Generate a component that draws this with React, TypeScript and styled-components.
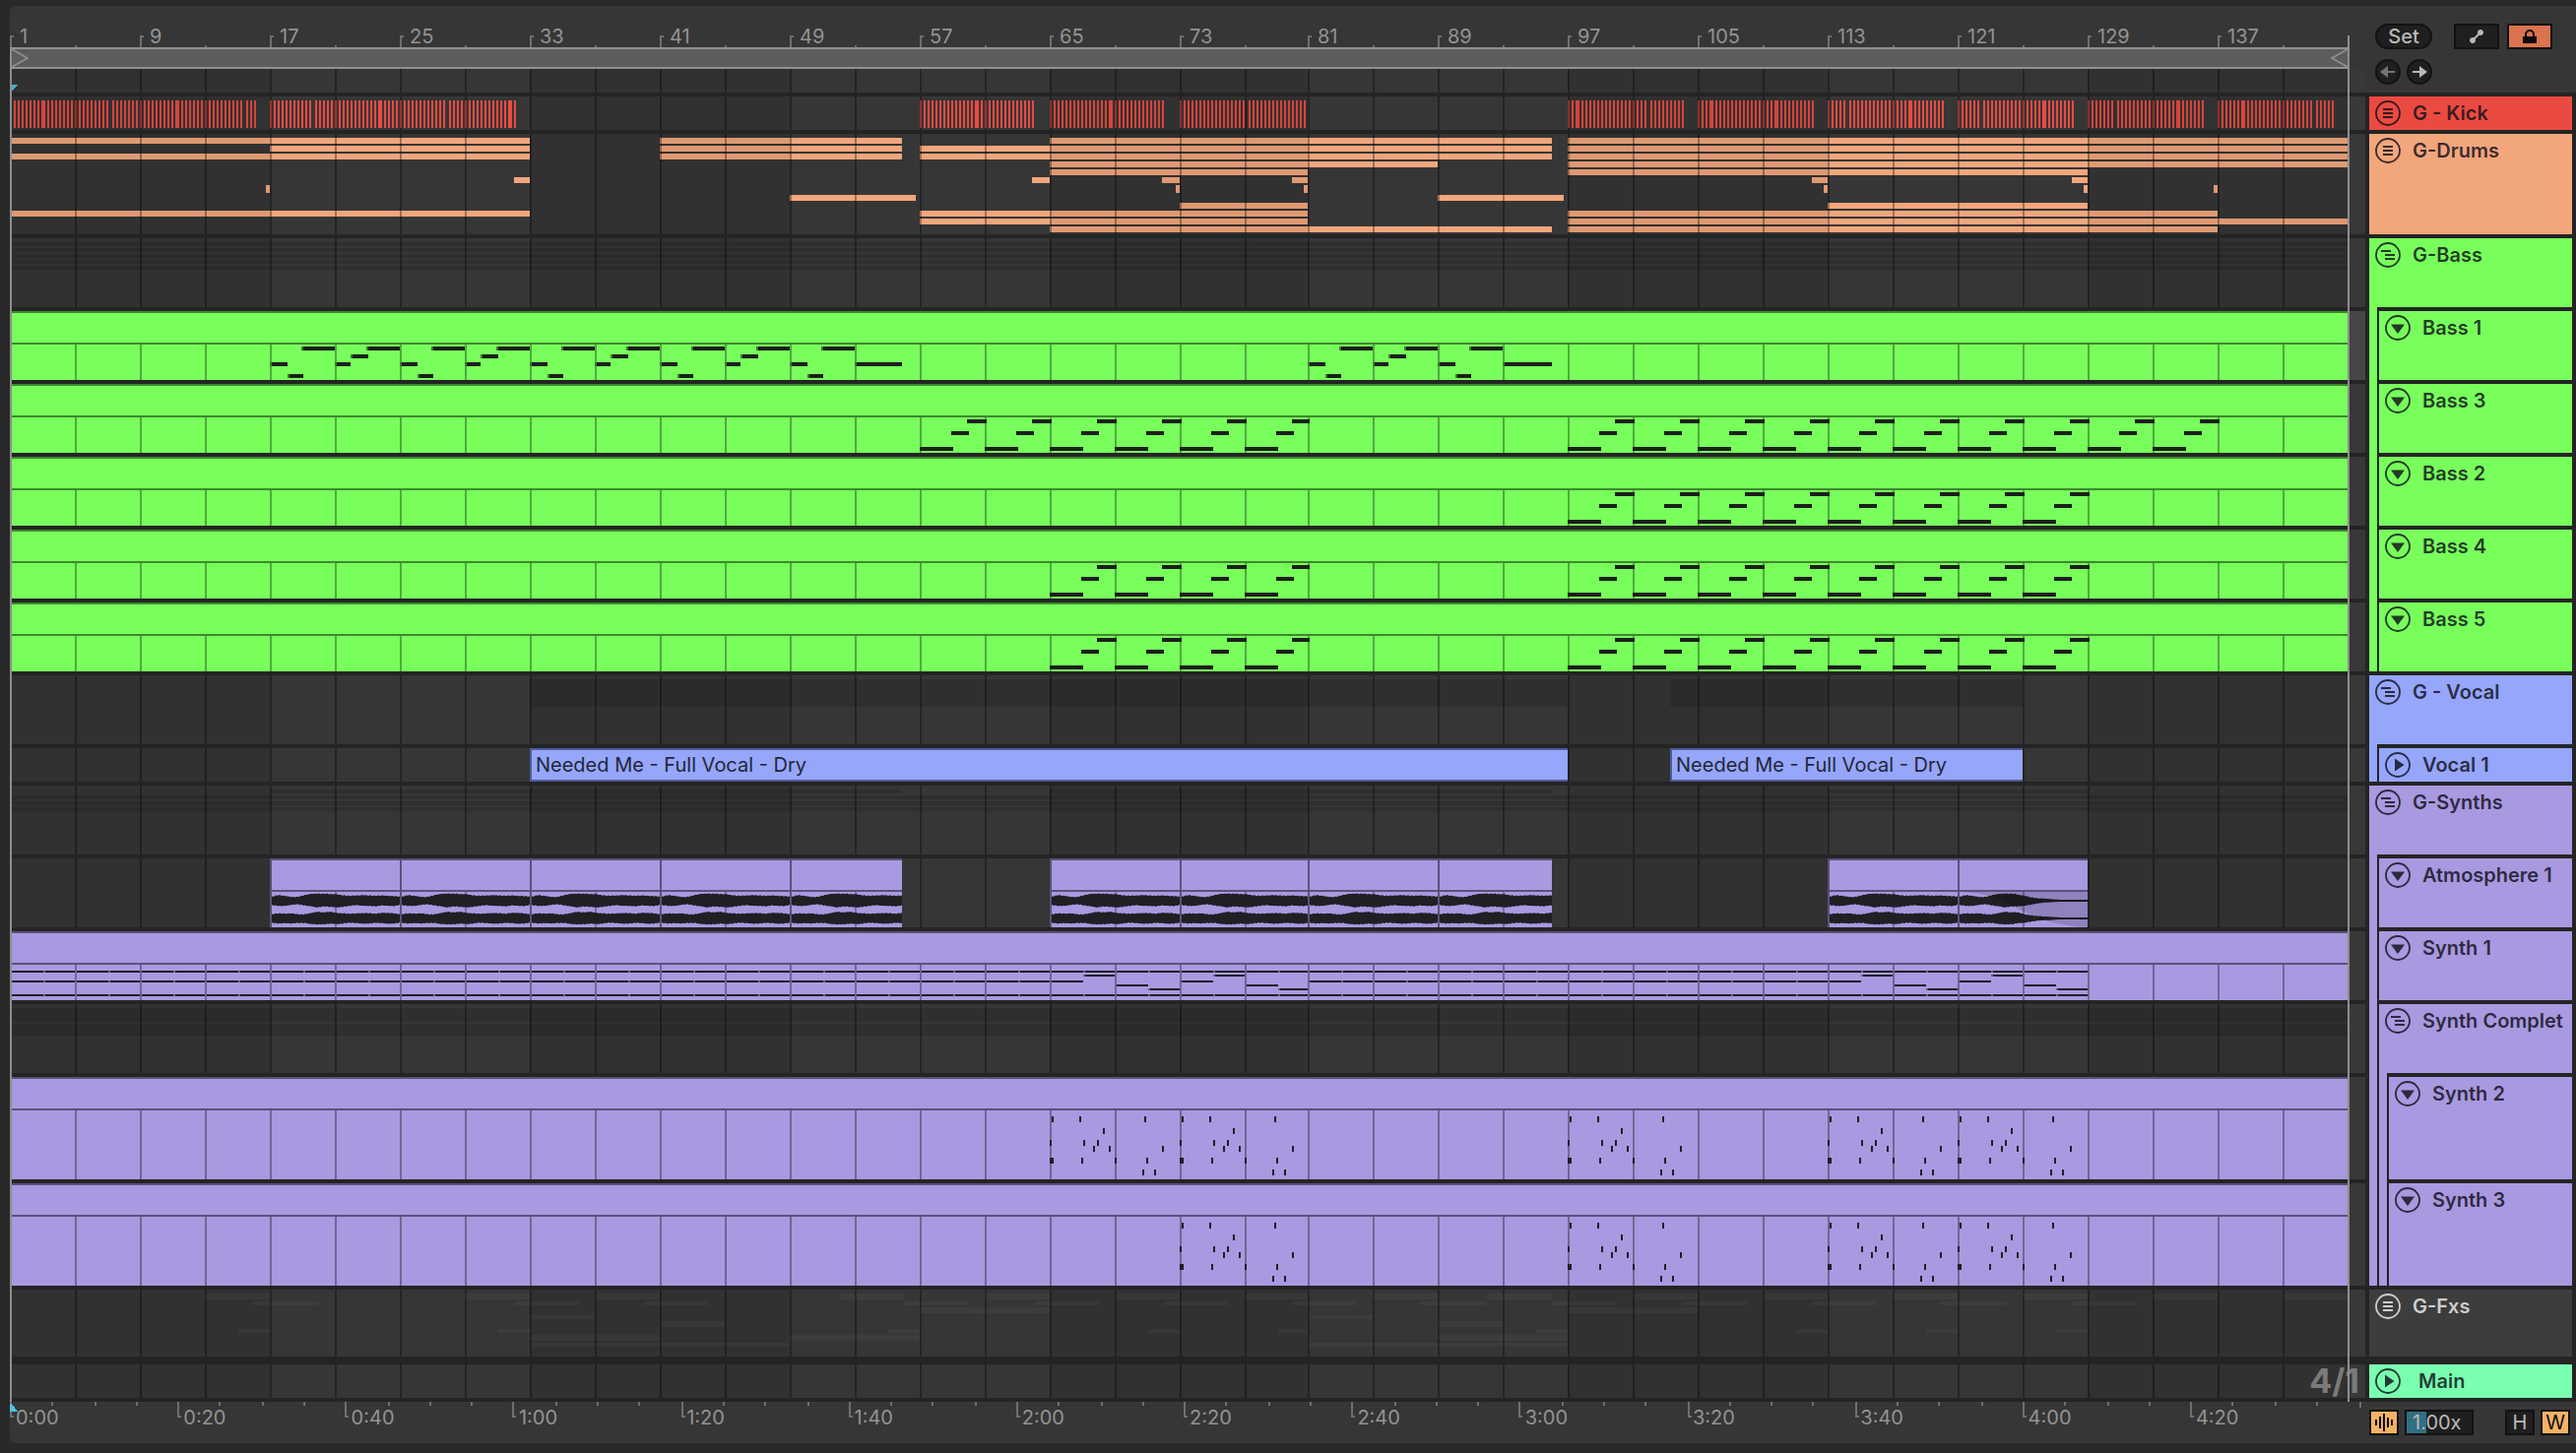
import React from "react";
import styled, { createGlobalStyle } from "styled-components";

/* ---------- timeline geometry ---------- */

const SPAN = 2376;
const BAR = 16.5;
const LAST_BAR = 145;

const at = (bar: number) => {
  const raw = (bar - 1) * BAR - (bar >= 81 ? 2 : 0);
  return 2 * Math.round(raw / 2);
};

const range = (from: number, to: number, step: number) => {
  const out: number[] = [];
  for (let v = from; v < to; v += step) out.push(v);
  return out;
};

const gridBars = range(1, LAST_BAR, 4);
const labelBars = range(1, LAST_BAR, 8);

const ink = "#1f1f24";
const gap = "#242424";
const green = "#78ff5c";
const blue = "#96a6fa";
const purple = "#a999e0";
const orange = "#f2a67c";
const red = "#eb4a41";
const mint = "#7affb0";

/* ---------- page ---------- */

const GlobalStyle = createGlobalStyle`
  *, *::before, *::after { box-sizing: border-box; }
  body { margin: 0; background: #292929; }
  button, input { font: inherit; padding: 0; margin: 0; }
`;

const Page = styled.main`
  min-height: 100vh;
  padding: 6px 0 10px 10px;
  background: #292929;
  font-family: Inter, "Liberation Sans", sans-serif;
  font-size: 20px;
  line-height: 26px;
  color: #939393;
`;

const Panel = styled.div`
  display: grid;
  grid-template-columns: minmax(0, 1fr) 214px;
  background: ${gap};
  border-radius: 6px 0 0 6px;
  overflow: hidden;
`;

const Arrangement = styled.section`
  position: relative;
  display: flex;
  flex-direction: column;
`;

const EdgeLine = styled.i<{ $end?: boolean }>`
  position: absolute;
  z-index: 2;
  top: ${(p) => (p.$end ? 30 : 42)}px;
  bottom: 42px;
  width: 2px;
  background: #8e8e8e;
  ${(p) => (p.$end ? "right: 16px;" : "left: 0;")}
`;

/* ---------- bar ruler ---------- */

const BarRuler = styled.div`
  position: relative;
  height: 42px;
  padding-right: 16px;
  background: #363636;
`;

const BarLabels = styled.div`
  display: grid;
  height: 42px;
  grid-template-columns: ${labelBars
    .map((b) => `minmax(0, ${at(Math.min(b + 8, LAST_BAR)) - at(b)}fr)`)
    .join(" ")} 2px;
  align-items: end;
`;

const BarLabel = styled.span`
  padding: 0 0 0 10px;
  line-height: 22px;
`;

const Ticks = styled.svg`
  position: absolute;
  inset: 0;
  display: block;
  width: calc(100% - 16px);
  height: 100%;
`;

const LoopStrip = styled.div`
  display: flex;
  justify-content: space-between;
  height: 22px;
  margin-right: 16px;
  border: solid #909090;
  border-width: 2px 0;
  background: #5d5d5d;
  svg { display: block; }
`;

const LoopRow = styled.div`
  height: 22px;
  background: #363636;
`;

/* ---------- lanes ---------- */

const Lane = styled.div<{ $h: number; $tail?: string; $before?: number }>`
  position: relative;
  display: grid;
  grid-template-columns: minmax(0, 1fr) 16px;
  height: ${(p) => p.$h}px;
  margin-top: ${(p) => p.$before ?? 4}px;
  background: ${(p) => p.$tail ?? "#383838"};
`;

const LaneCanvas = styled.svg`
  display: block;
  width: 100%;
  height: 100%;
  background: #363636;
`;

const Clip = styled.div`
  position: absolute;
  top: 0;
  bottom: 0;
  padding-left: 4px;
  border: 2px solid #4e5a99;
  border-right: 0;
  background: ${blue};
  color: #232638;
  line-height: 30px;
  white-space: nowrap;
  overflow: hidden;
`;

const ClipLayer = styled.div`
  position: absolute;
  inset: 0 16px 0 0;
`;

const Signature = styled.span`
  position: absolute;
  right: 6px;
  top: 0;
  line-height: 34px;
  font-size: 34px;
  font-weight: 700;
  color: #7a7a7a;
`;

const Shade = ({ h }: { h: number }) => (
  <g fill="#000" fillOpacity={0.08}>
    {[1, 33, 65, 97, 129].map((b) => (
      <rect key={b} x={at(b)} y={0} width={at(b + 16) - at(b)} height={h} />
    ))}
  </g>
);

const Grid = ({ y = 0, h }: { y?: number; h: number }) => (
  <g fill="#000" fillOpacity={0.33}>
    {gridBars.map((b) => (
      <rect key={b} x={at(b)} y={y} width={2} height={h} />
    ))}
  </g>
);

interface CanvasProps {
  h: number;
  children?: React.ReactNode;
}

const Canvas = ({ h, children }: CanvasProps) => (
  <LaneCanvas viewBox={`0 0 ${SPAN} ${h}`} preserveAspectRatio="none" shapeRendering="crispEdges" aria-hidden="true">
    {children}
  </LaneCanvas>
);

/* lane whose content sits under the grid */
const PlainLane = ({ h, before, extra, children }: { h: number; before?: number; extra?: React.ReactNode; children?: React.ReactNode }) => (
  <Lane $h={h} $before={before}>
    <Canvas h={h}>
      {children}
      <Shade h={h} />
      <Grid h={h} />
    </Canvas>
    {extra}
  </Lane>
);

type Seg = [number, number];

const Segs = ({ y, h, list, fill, opacity = 1 }: { y: number; h: number; list: Seg[]; fill: string; opacity?: number }) => (
  <g fill={fill} fillOpacity={opacity}>
    {list.map(([a, b]) => (
      <rect key={a} x={at(a)} y={y} width={at(b) - at(a)} height={h} />
    ))}
  </g>
);

/* ---------- kick ---------- */

/* start bar, length in px, kind of each drift (wide note or gap), beat offsets of the drifts */
const kickClips: [number, number, string, number[]][] = [
  [1, 249, "WGWG", [8, 24, 41, 57]],
  [17, 249, "GWGW", [10, 27, 43, 59]],
  [57, 117, "W", [14]],
  [65, 117, "W", [15]],
  [73, 130, "G", [16]],
  [97, 117, "WG", [2, 19]],
  [105, 118, "WW", [3, 19]],
  [113, 118, "GW", [4, 20]],
  [121, 117, "GW", [5, 21]],
  [129, 117, "GW", [6, 22]],
  [137, 117, "WG", [6, 23]],
];

const KickNotes = () => (
  <g fill={red}>
    {kickClips.map(([bar, end, kinds, beats]) => {
      const rects: React.ReactElement[] = [];
      let x = 0;
      for (let n = 0; x < end; n += 1) {
        const hit = beats.indexOf(n);
        const wide = hit >= 0 && kinds[hit] === "W";
        rects.push(<rect key={n} x={at(bar) + x} y={4} width={wide ? 4 : 2} height={28} />);
        x += hit >= 0 ? 6 : 4;
      }
      return <g key={bar}>{rects}</g>;
    })}
  </g>
);

/* ---------- drums ---------- */

const drumRows: [number, number, Seg[]][] = [
  [4, 6, [[1, 33], [41, 55.9], [65, 96], [97, 145]]],
  [12, 6, [[17, 33], [41, 55.9], [57, 96], [97, 145]]],
  [20, 6, [[1, 33], [41, 55.9], [57, 96], [97, 145]]],
  [28, 6, [[65, 89], [97, 145]]],
  [36, 6, [[65, 81], [97, 129]]],
  [44, 6, [[32, 33], [63.9, 65], [71.9, 73], [79.9, 81], [112, 113], [128, 129]]],
  [52, 8, [[16.75, 17], [72.7, 73], [80.6, 81], [112.75, 113], [128.75, 129], [136.75, 137]]],
  [62, 6, [[49, 56.75], [89, 96.75]]],
  [70, 6, [[73, 81], [113, 129]]],
  [78, 6, [[1, 33], [57, 81], [97, 137]]],
  [86, 6, [[57, 81], [97, 145]]],
  [94, 6, [[65, 96], [97, 137]]],
];

/* ---------- midi clip lanes ---------- */

interface MidiProps {
  h: number;
  color: string;
  edge: string;
  tail?: string;
  children?: React.ReactNode;
}

const MidiLane = ({ h, color, edge, tail, children }: MidiProps) => (
  <Lane $h={h} $tail={tail}>
    <Canvas h={h}>
      <rect x={0} y={0} width={at(LAST_BAR)} height={h} fill={color} />
      <rect x={0} y={0} width={at(LAST_BAR)} height={2} fill={edge} />
      <rect x={0} y={32} width={at(LAST_BAR)} height={2} fill={edge} />
      <Grid y={34} h={h - 34} />
      {children}
    </Canvas>
  </Lane>
);

/* offset in bars, length in bars, y */
type Note = [number, number, number];

const Pattern = ({ starts, notes, nick }: { starts: number[]; notes: Note[]; nick?: string }) => (
  <>
    {starts.flatMap((s) =>
      notes.map(([o, len, y]) => (
        <g key={`${s}-${o}-${y}`}>
          <rect x={at(s + o)} y={y} width={at(s + o + len) - at(s + o)} height={4} fill="#1b1f1b" />
          {nick && <rect x={at(s + o)} y={y} width={2} height={4} fill={nick} />}
        </g>
      ))
    )}
  </>
);

const bassOneA: Note[] = [[0, 1.1, 52], [1.1, 1, 64], [1.95, 2.05, 36]];
const bassOneB: Note[] = [[0, 1, 52], [0.95, 1.05, 44], [1.9, 2.1, 36]];
const bassLow: Note[] = [[0, 2, 64], [1.9, 1.15, 48], [2.88, 1.2, 36]];

const greenEdge = "#3d8a2d";
const purpleEdge = "#5c5079";

const BassLane = ({ starts }: { starts: number[] }) => (
  <MidiLane h={70} color={green} edge={greenEdge}>
    <Pattern starts={starts} notes={bassLow} />
  </MidiLane>
);

/* ---------- atmosphere audio ---------- */

const topA = [4, 5.5, 4.6, 3.6, 3.6, 5.6, 6.8, 7.2, 7.2, 7, 6.8, 5.6, 5.4, 5.6, 6, 5.6, 5.2, 5.6, 5, 4.6, 4];
const lowA = [4, 5, 5, 4, 3.4, 4.6, 5.6, 7, 5.8, 6.4, 7, 6.4, 5.6, 4.8, 5.4, 5.4, 5.8, 4.8, 5.2, 5.2, 3.6];
const topB = [4, 5, 4.6, 5, 4, 4, 5.4, 6.8, 6.2, 7, 5.8, 5.4, 5, 5.4, 5.8, 5.6, 5, 5.8, 5.6, 5, 4];
const lowB = [4, 5, 4.4, 5, 4.4, 4.4, 5.6, 6.2, 6, 5.4, 6, 5.4, 4.6, 5, 5.6, 5.4, 4.6, 4.8, 5.4, 5, 3.6];

const sample = (env: number[], t: number) => {
  const p = Math.min(t * (env.length - 1), env.length - 1.001);
  const i = Math.floor(p);
  return env[i] + (env[i + 1] - env[i]) * (p - i);
};

const wavePath = (x0: number, width: number, mid: number, top: number[], low: number[], fade: boolean) => {
  const steps = range(0, width + 1, 2);
  const level = (x: number) => {
    if (!fade) return 1;
    const t = x / 132;
    return t < 0.42 ? 1 : Math.max(0, Math.pow(1 - (t - 0.42) / 0.58, 1.8));
  };
  const noise = (x: number, k: number) => Math.sin(x * 1.7 + k) * 0.4 + Math.sin(x * 3.1 + k * 2) * 0.3;
  const up = steps.map((x) => `${x0 + x},${mid - Math.max(1, (sample(top, x / 132) + noise(x, 1)) * level(x))}`);
  const down = steps
    .slice()
    .reverse()
    .map((x) => `${x0 + x},${mid + Math.max(1, (sample(low, x / 132) + noise(x, 4)) * level(x))}`);
  return `M${up.join("L")}L${down.join("L")}Z`;
};

const atmosphere: { bar: number; end: number; fade?: boolean }[] = [
  { bar: 17, end: 25 }, { bar: 25, end: 33 }, { bar: 33, end: 41 }, { bar: 41, end: 49 }, { bar: 49, end: 55.9 },
  { bar: 65, end: 73 }, { bar: 73, end: 81 }, { bar: 81, end: 89 }, { bar: 89, end: 96 },
  { bar: 113, end: 121 }, { bar: 121, end: 129, fade: true },
];

const AtmosphereClips = () => (
  <>
    {atmosphere.map(({ bar, end, fade }) => {
      const x = at(bar);
      const w = at(end) - x;
      return (
        <g key={bar}>
          <rect x={x} y={0} width={w} height={70} fill={purple} />
          <rect x={x} y={0} width={w} height={2} fill={purpleEdge} />
          <rect x={x} y={32} width={w} height={2} fill={purpleEdge} />
          <rect x={x + 66} y={34} width={2} height={36} fill="#7a6ba3" />
          <g shapeRendering="auto" fill={ink}>
            <path d={wavePath(x + 2, w - 2, 43, topA, lowA, !!fade)} />
            <path d={wavePath(x + 2, w - 2, 61, topB, lowB, !!fade)} />
          </g>
          <rect x={x} y={0} width={2} height={70} fill={purpleEdge} />
          {fade && (
            <path
              shapeRendering="auto"
              d={`M${x + 4} 34C${x + 60} 36 ${x + 60} 66 ${x + w} 70V34Z`}
              fill="#000"
              fillOpacity={0.15}
            />
          )}
        </g>
      );
    })}
  </>
);

/* ---------- synths ---------- */

const leadVoice: Record<number, number> = {};
[65, 73, 113, 121].forEach((b) => {
  leadVoice[b + 2] = 44;
  leadVoice[b + 4] = 54;
  leadVoice[b + 6] = 58;
});

const SynthOneNotes = () => (
  <>
    {range(1, 129, 2).flatMap((b) =>
      [40, leadVoice[b] ?? 50, 64].map((y) => (
        <g key={`${b}-${y}`}>
          <rect x={at(b)} y={y} width={at(b + 2) - at(b)} height={2} fill={ink} />
          <rect x={at(b)} y={y} width={2} height={2} fill="#6b5e91" />
        </g>
      ))
    )}
  </>
);

/* pixel offset, y, width */
const arp: [number, number, number][] = [
  [2, 40, 2], [30, 40, 2], [96, 40, 2], [54, 52, 2], [0, 64, 2], [34, 64, 2], [48, 64, 2],
  [44, 70, 2], [60, 70, 2], [114, 70, 2], [0, 82, 4], [32, 82, 2], [66, 82, 2], [98, 82, 2],
  [94, 94, 2], [106, 94, 2],
];

const Arp = ({ starts }: { starts: number[] }) => (
  <g fill={ink}>
    {starts.flatMap((s) => arp.map(([o, y, w]) => <rect key={`${s}-${o}-${y}`} x={at(s) + o} y={y} width={w} height={6} />))}
  </g>
);

/* ---------- effects ---------- */

const fxRows: [number, number, Seg[]][] = [
  [4, 6, [[13, 17], [29, 33], [37, 41], [52, 56], [61, 65], [69, 73], [77, 81], [85, 89], [92, 96], [101, 105], [109, 113], [117, 121], [125, 129], [133, 137], [141, 145]]],
  [12, 4, [[16, 20], [32, 36], [40, 44], [56, 60], [64, 68], [72, 76], [80, 84], [88, 92], [96, 100], [104, 108], [112, 116], [120, 124], [128, 132]]],
  [18, 6, [[57, 65], [97, 105]]],
  [26, 4, [[33, 37], [81, 85]]],
  [32, 6, [[41, 45], [89, 93]]],
  [40, 4, [[15, 17], [31, 33], [55, 57], [71, 73], [79, 81], [95, 97], [111, 113], [119, 121], [127, 129]]],
  [46, 6, [[33, 41], [49, 57], [89, 97]]],
  [54, 4, [[33, 49], [81, 97]]],
];

/* ---------- time ruler ---------- */

const times = ["0:00", "0:20", "0:40", "1:00", "1:20", "1:40", "2:00", "2:20", "2:40", "3:00", "3:20", "3:40", "4:00", "4:20"];
const timeX = (seconds: number) => 2 * Math.round((seconds * 8.516) / 2);

const TimeRuler = styled.div`
  position: relative;
  height: 42px;
  margin-top: 4px;
  background: #363636;
`;

const TimeTicks = styled.svg`
  position: absolute;
  inset: 0;
  display: block;
  width: 100%;
  height: 100%;
`;

const TimeLabels = styled.div`
  display: grid;
  grid-template-columns: repeat(13, minmax(0, 1703fr)) minmax(0, 1781fr);
  height: 42px;
`;

const TimeLabel = styled.span`
  padding: 3px 0 0 6px;
`;

/* ---------- headers ---------- */

const Side = styled.aside`
  display: flex;
  flex-direction: column;
`;

const Toolbar = styled.div`
  display: flex;
  flex-direction: column;
  gap: 10px;
  height: 88px;
  padding: 18px 24px 0 10px;
  background: #363636;
`;

const ToolRow = styled.div<{ $gap: number }>`
  display: flex;
  gap: ${(p) => p.$gap}px;
  align-items: center;
`;

const Spacer = styled.div`
  flex: 1;
`;

const Box = styled.button<{ $w: number; $fill?: string; $round?: boolean; $dim?: boolean }>`
  display: flex;
  align-items: center;
  justify-content: center;
  width: ${(p) => p.$w}px;
  height: 26px;
  border: 2px solid #121212;
  border-radius: ${(p) => (p.$round ? 13 : 0)}px;
  background: ${(p) => p.$fill ?? "#1f1f1f"};
  color: ${(p) => (p.$fill ? "#0c0c0c" : p.$dim ? "#757575" : "#b9b9b9")};
  line-height: 22px;
  svg { display: block; flex: none; }
`;

const SetButton = styled(Box)`
  font-weight: 500;
`;

const Headers = styled.div`
  display: flex;
  flex-direction: column;
  gap: 4px;
  padding: 4px 4px 0 4px;
`;

const Track = styled.div<{ $color: string; $light?: boolean }>`
  background: ${(p) => p.$color};
  color: ${(p) => (p.$light ? "#cdcdcd" : "rgba(16, 16, 26, 0.82)")};
`;

const TrackTitle = styled.div<{ $h: number; $wide?: boolean }>`
  display: flex;
  align-items: flex-start;
  gap: ${(p) => (p.$wide ? 18 : 12)}px;
  height: ${(p) => p.$h}px;
  padding: 4px 0 0 6px;
  font-weight: 600;
  white-space: nowrap;
  overflow: hidden;
`;

const Children = styled.div`
  display: flex;
  flex-direction: column;
  gap: 4px;
  margin-left: 8px;
  padding: 4px 0 0 2px;
  background: ${gap};
`;

const MainTrack = styled.div`
  margin-top: 4px;
`;

const Fold = styled.button`
  flex: none;
  display: block;
  width: 26px;
  height: 26px;
  border: 0;
  background: none;
  color: inherit;
  svg { display: block; }
`;

type Glyph = "lines" | "group" | "down" | "play";

const glyphs: Record<Glyph, React.ReactElement> = {
  lines: <path d="M8 8h10v2H8zM8 12h10v2H8zM8 16h10v2H8z" />,
  group: <path d="M6 8h10v2H6zM10 12h10v2H10zM10 16h10v2H10z" />,
  down: <path d="M6 9.5h14L13 19z" />,
  play: <path d="M10 6.5v13L19.5 13z" />,
};

interface NodeProps {
  name: string;
  color: string;
  h: number;
  glyph: Glyph;
  light?: boolean;
  wide?: boolean;
  children?: React.ReactNode;
}

const TrackNode = ({ name, color, h, glyph, light, wide, children }: NodeProps) => (
  <Track $color={color} $light={light}>
    <TrackTitle $h={h} $wide={wide}>
      <Fold type="button" aria-label={`Fold ${name}`}>
        <svg width="26" height="26" viewBox="0 0 26 26" fill="currentColor">
          <circle cx="13" cy="13" r="12" fill="none" stroke="currentColor" strokeWidth="1.8" />
          {glyphs[glyph]}
        </svg>
      </Fold>
      <span>{name}</span>
    </TrackTitle>
    {children && <Children>{children}</Children>}
  </Track>
);

const Footer = styled.div`
  display: flex;
  align-items: flex-start;
  gap: 6px;
  height: 42px;
  margin-top: 4px;
  padding: 8px 6px 0 4px;
  background: #363636;
`;

const Speed = styled.input`
  width: 70px;
  height: 26px;
  padding: 0 0 0 6px;
  border: 2px solid #121212;
  background: linear-gradient(90deg, #316f82 20px, #1f1f1f 20px);
  color: #b9b9b9;
`;

const Arrow = ({ back }: { back?: boolean }) => (
  <svg width="16" height="14" viewBox="0 0 16 14" fill="currentColor">
    {back ? <path d="M0 7 8 1v5h7v2H8v5z" /> : <path d="M16 7 8 1v5H1v2h7v5z" />}
  </svg>
);

/* ---------- app ---------- */

export default function App() {
  return (
    <>
      <GlobalStyle />
      <Page>
        <Panel>
          <Arrangement aria-label="Arrangement">
            <EdgeLine />
            <EdgeLine $end />
            <BarRuler>
              <Ticks viewBox={`0 0 ${SPAN} 42`} preserveAspectRatio="none" shapeRendering="crispEdges" fill="#6f6f6f">
                {gridBars.map((b) =>
                  (b - 1) % 8 === 0 ? (
                    <path key={b} d={`M${at(b)} 30h4v2h-2v10h-2z`} />
                  ) : (
                    <rect key={b} x={at(b)} y={40} width={2} height={2} />
                  )
                )}
              </Ticks>
              <BarLabels>
                {labelBars.map((b) => (
                  <BarLabel key={b}>{b}</BarLabel>
                ))}
              </BarLabels>
            </BarRuler>
            <LoopRow>
              <LoopStrip>
                <svg width="22" height="18" viewBox="0 0 22 18" fill="none" stroke="#909090" strokeWidth="1.6">
                  <path d="M2 0 18 9 2 18" />
                </svg>
                <svg width="22" height="18" viewBox="0 0 22 18" fill="none" stroke="#909090" strokeWidth="1.6">
                  <path d="M20 0 4 9l16 9" />
                </svg>
              </LoopStrip>
            </LoopRow>
            <PlainLane h={24} before={0}>
              <path d="M0 16h8l-7 7z" fill="#4fc1dc" />
            </PlainLane>
            <PlainLane h={34}>
              <KickNotes />
            </PlainLane>
            <PlainLane h={102}>
              {drumRows.map(([y, h, list]) => (
                <Segs key={y} y={y} h={h} list={list} fill={orange} />
              ))}
            </PlainLane>
            <PlainLane h={70}>
              {[4, 10, 16, 22, 28].map((y) => (
                <Segs key={y} y={y} h={4} list={[[1, 145]]} fill="#000" opacity={0.13} />
              ))}
            </PlainLane>
            <MidiLane h={70} color={green} edge={greenEdge} tail="#464646">
              <Pattern starts={[17, 25, 33, 41, 49, 81, 89]} notes={bassOneA} nick="#3a7a2d" />
              <Pattern starts={[21, 29, 37, 45, 85]} notes={bassOneB} nick="#3a7a2d" />
              <Pattern starts={[53]} notes={[[0, 2.9, 52]]} nick="#3a7a2d" />
              <Pattern starts={[93]} notes={[[0, 3, 52]]} nick="#3a7a2d" />
            </MidiLane>
            <BassLane starts={[...range(57, 81, 4), ...range(97, 137, 4)]} />
            <BassLane starts={range(97, 129, 4)} />
            <BassLane starts={[...range(65, 81, 4), ...range(97, 129, 4)]} />
            <BassLane starts={[...range(65, 81, 4), ...range(97, 129, 4)]} />
            <PlainLane h={70}>
              <Segs y={4} h={28} list={[[33, 97], [103.3, 125]]} fill="#000" opacity={0.13} />
            </PlainLane>
            <PlainLane
              h={34}
              extra={
                <ClipLayer>
                  {([[33, 97], [103.3, 125]] as Seg[]).map(([a, b]) => (
                    <Clip key={a} style={{ left: `${(at(a) / SPAN) * 100}%`, width: `${((at(b) - at(a)) / SPAN) * 100}%` }}>
                      Needed Me - Full Vocal - Dry
                    </Clip>
                  ))}
                </ClipLayer>
              }
            />
            <PlainLane h={70}>
              <Segs y={4} h={4} list={[[17, 55.9], [65, 96], [113, 129]]} fill="#000" opacity={0.13} />
              {[10, 16, 22].map((y) => (
                <Segs key={y} y={y} h={4} list={[[1, 145]]} fill="#000" opacity={0.13} />
              ))}
            </PlainLane>
            <Lane $h={70}>
              <Canvas h={70}>
                <Shade h={70} />
                <Grid h={70} />
                <AtmosphereClips />
              </Canvas>
            </Lane>
            <MidiLane h={70} color={purple} edge={purpleEdge}>
              <SynthOneNotes />
            </MidiLane>
            <PlainLane h={70}>
              <Segs y={4} h={14} list={[[1, 145]]} fill="#000" opacity={0.13} />
              <Segs y={20} h={12} list={[[1, 145]]} fill="#000" opacity={0.13} />
            </PlainLane>
            <MidiLane h={104} color={purple} edge={purpleEdge}>
              <Arp starts={[65, 73, 97, 113, 121]} />
            </MidiLane>
            <MidiLane h={104} color={purple} edge={purpleEdge}>
              <Arp starts={[73, 97, 113, 121]} />
            </MidiLane>
            <PlainLane h={68}>
              {fxRows.map(([y, h, list]) => (
                <Segs key={y} y={y} h={h} list={list} fill="#fff" opacity={0.03} />
              ))}
            </PlainLane>
            <PlainLane h={34} before={8} extra={<Signature>4/1</Signature>} />
            <TimeRuler>
              <TimeTicks viewBox={`0 0 ${SPAN + 16} 42`} preserveAspectRatio="none" shapeRendering="crispEdges" fill="#6f6f6f">
                {range(0, 280, 5).map((s) =>
                  s % 20 === 0 ? (
                    <path key={s} d={`M${timeX(s)} 0h2v14h2v2h-4z`} />
                  ) : (
                    <rect key={s} x={timeX(s)} y={0} width={2} height={4} />
                  )
                )}
                <rect x={timeX(280) + 2} y={0} width={2} height={6} />
                <path d="M0 2h2l6 8H0z" fill="#4fc1dc" />
              </TimeTicks>
              <TimeLabels>
                {times.map((t) => (
                  <TimeLabel key={t}>{t}</TimeLabel>
                ))}
              </TimeLabels>
            </TimeRuler>
          </Arrangement>

          <Side aria-label="Tracks">
            <Toolbar>
              <ToolRow $gap={8}>
                <SetButton type="button" $w={58} $round>Set</SetButton>
                <Spacer />
                <Box type="button" $w={46} aria-label="Automation mode">
                  <svg width="16" height="16" viewBox="0 0 16 16" fill="currentColor" stroke="currentColor">
                    <path d="M4 12 12 4" strokeWidth="2" />
                    <circle cx="4" cy="12" r="2.5" />
                    <circle cx="12" cy="4" r="2.5" />
                  </svg>
                </Box>
                <Box type="button" $w={46} $fill="#db7350" aria-label="Lock envelopes">
                  <svg width="16" height="16" viewBox="0 0 16 16" fill="none" stroke="currentColor">
                    <path d="M4 8V6a4 4 0 0 1 8 0v2" strokeWidth="2" />
                    <path d="M1 8h14v7H1z" fill="currentColor" stroke="none" />
                  </svg>
                </Box>
              </ToolRow>
              <ToolRow $gap={6}>
                <Box type="button" $w={26} $round $dim aria-label="Previous locator"><Arrow back /></Box>
                <Box type="button" $w={26} $round aria-label="Next locator"><Arrow /></Box>
              </ToolRow>
            </Toolbar>
            <Headers>
              <TrackNode name="G - Kick" color={red} h={34} glyph="lines" />
              <TrackNode name="G-Drums" color={orange} h={102} glyph="lines" />
              <TrackNode name="G-Bass" color={green} h={70} glyph="group">
                {["Bass 1", "Bass 3", "Bass 2", "Bass 4", "Bass 5"].map((n) => (
                  <TrackNode key={n} name={n} color={green} h={70} glyph="down" />
                ))}
              </TrackNode>
              <TrackNode name="G - Vocal" color={blue} h={70} glyph="group">
                <TrackNode name="Vocal 1" color={blue} h={34} glyph="play" />
              </TrackNode>
              <TrackNode name="G-Synths" color={purple} h={70} glyph="group">
                <TrackNode name="Atmosphere 1" color={purple} h={70} glyph="down" />
                <TrackNode name="Synth 1" color={purple} h={70} glyph="down" />
                <TrackNode name="Synth Complet" color={purple} h={70} glyph="group">
                  <TrackNode name="Synth 2" color={purple} h={104} glyph="down" />
                  <TrackNode name="Synth 3" color={purple} h={104} glyph="down" />
                </TrackNode>
              </TrackNode>
              <TrackNode name="G-Fxs" color="#3d3d3d" h={68} glyph="lines" light />
              <MainTrack>
                <TrackNode name="Main" color={mint} h={34} glyph="play" wide />
              </MainTrack>
            </Headers>
            <Footer>
              <Box type="button" $w={30} $fill="#f4b266" aria-label="Warp playback">
                <svg width="18" height="18" viewBox="0 0 18 18" fill="currentColor">
                  <path d="M0 6h2v6H0zM4 3h2v12H4zM8 0h2v18H8zM12 4h2v10h-2zM16 6h2v6h-2z" />
                </svg>
              </Box>
              <Speed aria-label="Playback speed" defaultValue="1.00x" />
              <Spacer />
              <Box type="button" $w={30}>H</Box>
              <Box type="button" $w={30} $fill="#f4b266">W</Box>
            </Footer>
          </Side>
        </Panel>
      </Page>
    </>
  );
}
